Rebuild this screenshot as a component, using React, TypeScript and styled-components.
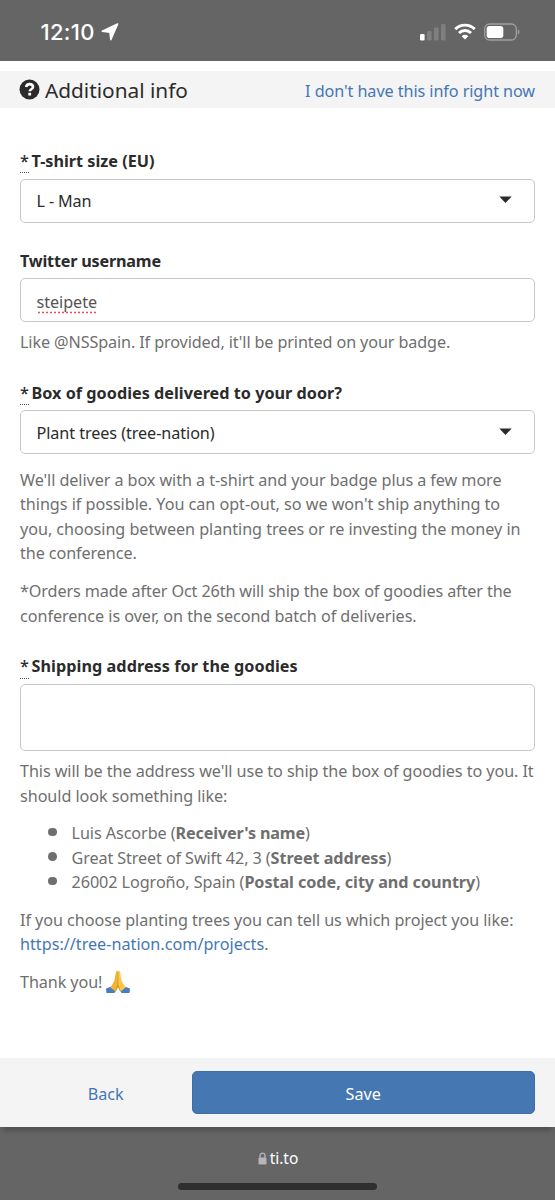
import React from "react";
import styled, { createGlobalStyle } from "styled-components";

const colors = {
  chrome: "#656565",
  panel: "#f4f4f4",
  ink: "#2b2b2b",
  muted: "#6f6f6f",
  link: "#4577b4",
  button: "#4578b3",
  border: "#c8c8c8",
};

const GlobalStyle = createGlobalStyle`
  * { box-sizing: border-box; }
  body {
    margin: 0;
    background: ${colors.chrome};
    color: ${colors.muted};
    font: 400 16.2px/24.6px "Noto Sans", "Open Sans", sans-serif;
  }
`;

const Screen = styled.div`
  width: 555px;
  height: 1200px;
  display: flex;
  flex-direction: column;
  overflow: hidden;
`;

const StatusBar = styled.header`
  height: 61px;
  padding: 2px 35px 0 40.5px;
  display: flex;
  align-items: center;
  justify-content: space-between;
  flex: none;
`;

const Clock = styled.div`
  display: flex;
  align-items: center;
  gap: 6px;
  color: #fff;
  font: 500 22px/24px Inter, sans-serif;
  letter-spacing: 0.3px;
`;

const StatusIcons = styled.div`
  display: flex;
  align-items: center;
  gap: 8px;
`;

const Sheet = styled.main`
  height: 1066px;
  padding-top: 10px;
  background: #fff;
  display: flex;
  flex-direction: column;
  flex: none;
  box-shadow: 0 7px 5px -3px rgba(0, 0, 0, 0.2);
`;

const SectionBar = styled.div`
  height: 37px;
  padding: 0 20px 0 19px;
  background: ${colors.panel};
  display: flex;
  align-items: center;
  justify-content: space-between;
  flex: none;
`;

const SectionTitle = styled.h1`
  margin: 0;
  display: flex;
  align-items: center;
  gap: 5px;
  color: ${colors.ink};
  font-size: 20.8px;
  font-weight: 400;
  line-height: 36px;
`;

const Link = styled.a<{ $ls?: number }>`
  color: ${colors.link};
  text-decoration: none;
  letter-spacing: ${(p) => p.$ls ?? 0}px;
`;

const SkipLink = styled(Link)`
  padding-top: 3px;
`;

const Form = styled.div`
  flex: 1;
  padding: 40px 20px 0;
`;

const Field = styled.section<{ $gap: number }>`
  margin-bottom: ${(p) => p.$gap}px;
`;

const Label = styled.label<{ $ls?: number; $drop?: number }>`
  display: flex;
  gap: 3px;
  height: 30.6px;
  padding-top: ${(p) => p.$drop ?? 0}px;
  color: ${colors.ink};
  font-weight: 700;
  letter-spacing: ${(p) => p.$ls ?? 0}px;
`;

const Required = styled.abbr`
  width: 8.5px;
  height: 24.6px;
  border-bottom: 1px dotted #555;
  text-decoration: none;
  font-weight: 500;
`;

const Control = styled.div<{ $height?: number; $ls?: number }>`
  height: ${(p) => p.$height ?? 44}px;
  padding: 1px 22px 0 15.5px;
  border: 1.5px solid ${colors.border};
  border-radius: 5px;
  display: flex;
  align-items: center;
  justify-content: space-between;
  color: ${colors.ink};
  letter-spacing: ${(p) => p.$ls ?? 0}px;
`;

const Misspelled = styled.span`
  padding-top: 2px;
  color: #555;
  background: radial-gradient(circle, #e2544f 0.9px, transparent 1.2px) 0 100% / 4px 3px repeat-x;
`;

const Paragraph = styled.p<{ $top: number }>`
  margin: ${(p) => p.$top}px 0 0;
`;

const Line = styled.span<{ $ls?: number }>`
  display: block;
  white-space: nowrap;
  letter-spacing: ${(p) => p.$ls ?? 0}px;
`;

const List = styled.ul`
  margin: 12.8px 0 0;
  padding: 0 0 0 28px;
  list-style: none;
`;

const Item = styled.li<{ $ls: number }>`
  display: flex;
  align-items: center;
  white-space: nowrap;
  letter-spacing: ${(p) => p.$ls}px;
  &::before {
    content: "";
    width: 8.5px;
    height: 8.5px;
    margin: 0 15px 3px 0;
    border-radius: 50%;
    background: ${colors.muted};
  }
`;

const Strong = styled.b<{ $ls: number }>`
  letter-spacing: ${(p) => p.$ls}px;
`;

const ThanksRow = styled.div`
  margin-top: 12.9px;
  display: flex;
  align-items: center;
  gap: 4px;
  letter-spacing: -0.1px;
`;

const Actions = styled.footer`
  height: 69px;
  padding: 13px 20px;
  background: ${colors.panel};
  display: flex;
  flex: none;
`;

const BackButton = styled.button`
  width: 171.5px;
  border: 0;
  padding: 3px 0 0;
  background: none;
  color: ${colors.link};
  font: inherit;
`;

const SaveButton = styled.button`
  flex: 1;
  padding: 3px 0 0;
  border: 1px solid #3f6fa8;
  border-radius: 5px;
  background: ${colors.button};
  color: #fff;
  font: inherit;
`;

const BrowserBar = styled.div`
  flex: 1;
  display: flex;
  flex-direction: column;
  align-items: center;
`;

const Address = styled.div`
  margin-top: 19px;
  height: 24px;
  display: flex;
  align-items: center;
  gap: 3px;
  padding-left: 1px;
  color: #fff;
  font-size: 15.5px;
`;

const HomeIndicator = styled.div`
  margin-top: 13px;
  width: 198.5px;
  height: 6.5px;
  border-radius: 4px;
  background: #2f2f2f;
`;

const LocationArrow = () => (
  <svg width="18" height="18" viewBox="0 0 18 18">
    <path
      d="M16.600 1 1.300 8.200 9 9.200 9.800 16.600z"
      fill="#fff"
      stroke="#fff"
      strokeWidth="1.600"
      strokeLinejoin="round"
    />
  </svg>
);

const Signal = () => (
  <svg width="27" height="18" viewBox="0 0 27 18">
    <rect x="1" y="11" width="4.600" height="6.500" rx="1.200" fill="#fff" />
    <rect x="8" y="8" width="4.600" height="9.500" rx="1.200" fill="#7f7f7f" />
    <rect x="15" y="4.500" width="4.600" height="13" rx="1.200" fill="#7f7f7f" />
    <rect x="22" y="1" width="4.600" height="16.500" rx="1.200" fill="#7f7f7f" />
  </svg>
);

const Wifi = () => (
  <svg width="22" height="17" viewBox="0 0 22 17">
    <g fill="none" stroke="#fff" strokeWidth="2.900">
      <path d="M1.300 6.100a13.800 13.800 0 0 1 19.400 0" />
      <path d="M5 10a8.500 8.500 0 0 1 12 0" />
    </g>
    <path d="M11 16.500 7.700 13.200a4.700 4.700 0 0 1 6.600 0z" fill="#fff" />
  </svg>
);

const Battery = () => (
  <svg width="36" height="18" viewBox="0 0 36 18">
    <rect x=".7" y="1" width="31.600" height="16" rx="4.800" fill="none" stroke="#a0a0a0" strokeWidth="1.300" />
    <rect x="2.700" y="3" width="16.600" height="12" rx="2.800" fill="#fff" />
    <path d="M33.800 6.300q1.700.8 1.700 2.700t-1.700 2.700z" fill="#a0a0a0" />
  </svg>
);

const QuestionIcon = () => (
  <svg width="21" height="21" viewBox="0 0 21 21">
    <circle cx="10.500" cy="10.500" r="10" fill={colors.ink} />
    <path d="M7.100 8.100C7.500 5.900 8.800 5.100 10.600 5.100c2 0 3.400 1.100 3.400 2.800 0 2.400-3.200 2.300-3.200 4.400" fill="none" stroke="#fff" strokeWidth="2.600" />
    <rect x="9.300" y="13.800" width="2.800" height="2.700" fill="#fff" />
  </svg>
);

const Caret = () => (
  <svg width="13" height="10" viewBox="0 0 13 10">
    <path d="M.3.500h12.400L6.500 7z" fill={colors.ink} />
  </svg>
);

const Padlock = () => (
  <svg width="9" height="13" viewBox="0 0 9 13">
    <path d="M2 6V3.700a2.500 2.500 0 0 1 5 0V6" fill="none" stroke="#b5b5ba" strokeWidth="1.300" />
    <rect x=".5" y="5.500" width="8" height="7" rx="1.200" fill="#b5b5ba" />
  </svg>
);

const FoldedHands = () => (
  <svg width="24" height="24" viewBox="0 0 24 24">
    <path d="M0 18.500 5.500 16.500 10 20.500 8.500 23H.5z" fill="#4a7cc0" />
    <path d="M24 18.500 18.500 16.500 14 20.500 15.500 23h8z" fill="#4a7cc0" />
    <path d="M11.700.8C10.200.6 9.900 2 9.600 4L8.300 11 4.500 17.500 9.500 21.500 12 17.500z" fill="#f3b42f" />
    <path d="M12.300.8c1.500-.2 1.800 1.200 2.100 3.200L15.700 11l3.800 6.500-5 4L12 17.500z" fill="#fbcb46" />
    <path d="M12 1.500V15l-2.300 6M12 15l2.300 6" fill="none" stroke="#c98a1c" strokeWidth=".8" />
  </svg>
);

export default function App() {
  return (
    <Screen>
      <GlobalStyle />
      <StatusBar>
        <Clock>
          12:10
          <LocationArrow />
        </Clock>
        <StatusIcons>
          <Signal />
          <Wifi />
          <Battery />
        </StatusIcons>
      </StatusBar>

      <Sheet>
        <SectionBar>
          <SectionTitle>
            <QuestionIcon />
            Additional info
          </SectionTitle>
          <SkipLink $ls={-0.08}>I don't have this info right now</SkipLink>
        </SectionBar>

        <Form>
          <Field $gap={25.3}>
            <Label $drop={0.6}>
              <Required>*</Required>T-shirt size (EU)
            </Label>
            <Control $ls={-0.15}>
              L - Man
              <Caret />
            </Control>
          </Field>

          <Field $gap={25.5}>
            <Label $ls={-0.2} $drop={0.8}>
              Twitter username
            </Label>
            <Control $ls={-0.06}>
              <Misspelled>steipete</Misspelled>
            </Control>
            <Paragraph $top={7.2}>
              <Line $ls={-0.12}>Like @NSSpain. If provided, it'll be printed on your badge.</Line>
            </Paragraph>
          </Field>

          <Field $gap={25}>
            <Label $ls={0.02} $drop={0.8}>
              <Required>*</Required>Box of goodies delivered to your door?
            </Label>
            <Control $ls={-0.07}>
              Plant trees (tree-nation)
              <Caret />
            </Control>
            <Paragraph $top={13.2}>
              <Line $ls={-0.08}>We'll deliver a box with a t-shirt and your badge plus a few more</Line>
              <Line $ls={-0.04}>things if possible. You can opt-out, so we won't ship anything to</Line>
              <Line $ls={-0.045}>you, choosing between planting trees or re investing the money in</Line>
              <Line $ls={-0.1}>the conference.</Line>
            </Paragraph>
            <Paragraph $top={13}>
              <Line $ls={-0.12}>*Orders made after Oct 26th will ship the box of goodies after the</Line>
              <Line $ls={-0.055}>conference is over, on the second batch of deliveries.</Line>
            </Paragraph>
          </Field>

          <Field $gap={0}>
            <Label $ls={0.06} $drop={0.8}>
              <Required>*</Required>Shipping address for the goodies
            </Label>
            <Control $height={67} />
            <Paragraph $top={8.4}>
              <Line $ls={-0.085}>This will be the address we'll use to ship the box of goodies to you. It</Line>
              <Line $ls={-0.06}>should look something like:</Line>
            </Paragraph>
            <List>
              <Item $ls={-0.08}>
                Luis Ascorbe (<Strong $ls={-0.15}>Receiver's name</Strong>)
              </Item>
              <Item $ls={-0.11}>
                Great Street of Swift 42, 3 (<Strong $ls={-0.03}>Street address</Strong>)
              </Item>
              <Item $ls={-0.07}>
                26002 Logroño, Spain (<Strong $ls={-0.06}>Postal code, city and country</Strong>)
              </Item>
            </List>
            <Paragraph $top={12.9}>
              <Line $ls={-0.06}>If you choose planting trees you can tell us which project you like:</Line>
              <Line>
                <Link $ls={0}>https://tree-nation.com/projects</Link>.
              </Line>
            </Paragraph>
            <ThanksRow>
              Thank you!
              <FoldedHands />
            </ThanksRow>
          </Field>
        </Form>

        <Actions>
          <BackButton>Back</BackButton>
          <SaveButton>Save</SaveButton>
        </Actions>
      </Sheet>

      <BrowserBar>
        <Address>
          <Padlock />
          ti.to
        </Address>
        <HomeIndicator />
      </BrowserBar>
    </Screen>
  );
}
